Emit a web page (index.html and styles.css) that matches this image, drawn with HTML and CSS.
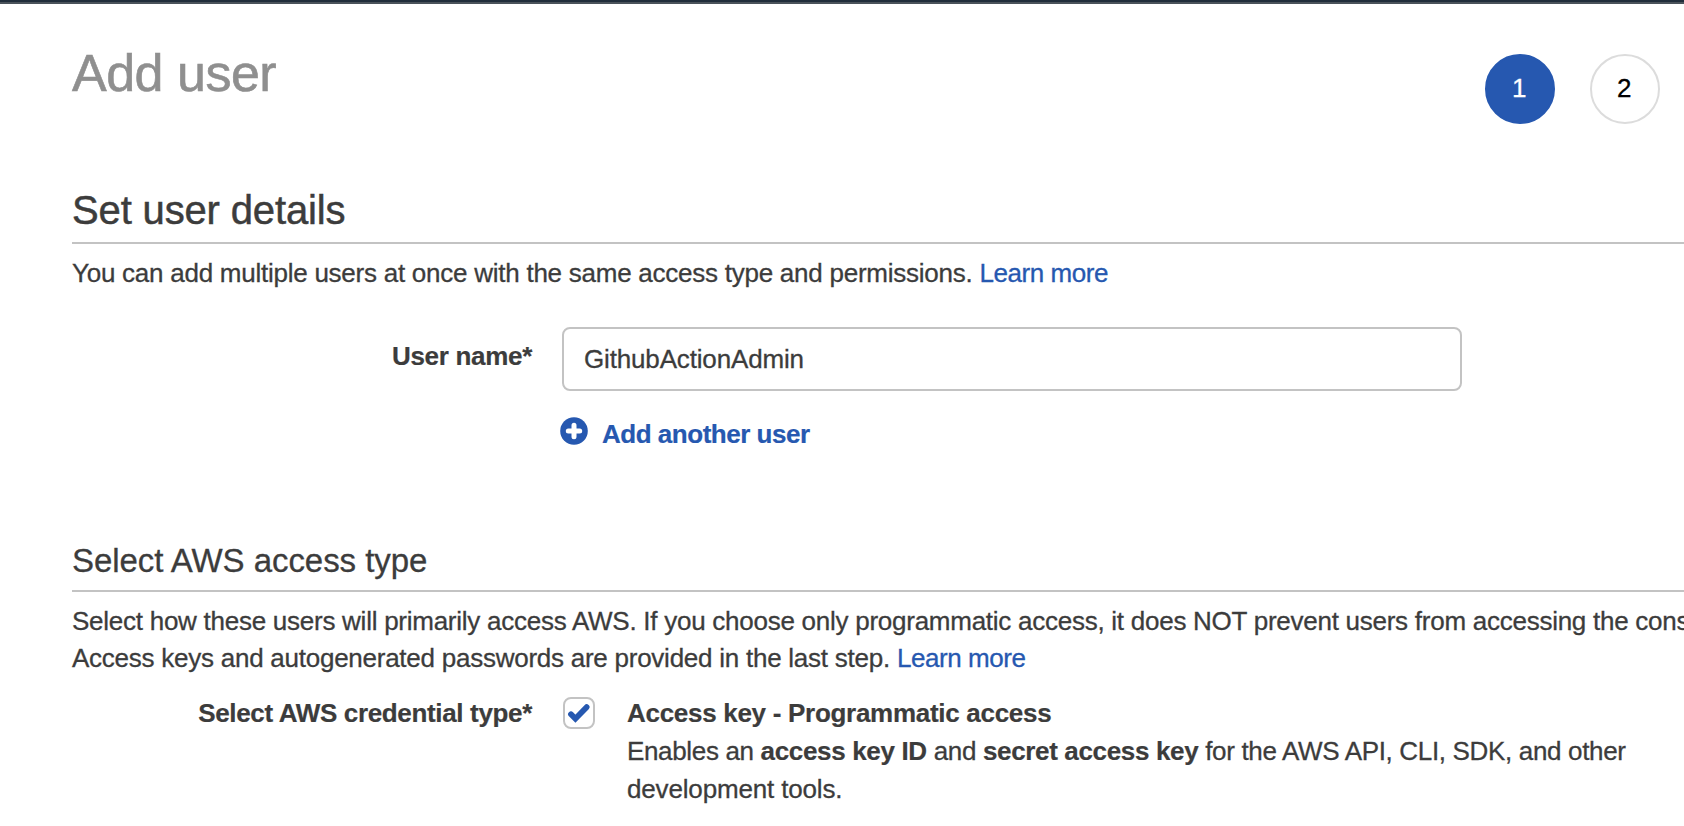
FILE: index.html
```html
<!DOCTYPE html>
<html lang="en">
<head>
<meta charset="utf-8">
<title>Add user</title>
<link rel="stylesheet" href="styles.css">
</head>
<body>
<div class="topbar"></div>
<main class="page">
  <header class="page-header">
    <h1 class="page-title">Add user</h1>
    <div class="steps">
      <span class="step step-active">1</span>
      <span class="step">2</span>
    </div>
  </header>

  <section class="details">
    <h2 class="section-title">Set user details</h2>
    <p class="intro"><span class="intro-text">You can add multiple users at once with the same access type and permissions.</span> <a class="link">Learn more</a></p>
    <div class="row">
      <label class="label label-input" for="username"><span>User name*</span></label>
      <div class="field">
        <input class="input" id="username" type="text" value="GithubActionAdmin">
        <a class="add-link">
          <svg class="plus" viewBox="0 0 28 28"><circle cx="14" cy="14" r="13.8" fill="#2658b0"/><path d="M14 8.3v11.4M8.3 14h11.4" stroke="#fff" stroke-width="5" stroke-linecap="round"/></svg>
          <span>Add another user</span>
        </a>
      </div>
    </div>
  </section>

  <section class="access">
    <h3 class="sub-title">Select AWS access type</h3>
    <p class="access-text"><span class="access-line">Select how these users will primarily access AWS. If you choose only programmatic access, it does NOT prevent users from accessing the cons</span><br><span>Access keys and autogenerated passwords are provided in the last step.</span> <a class="link">Learn more</a></p>
    <div class="row row-credential">
      <div class="label label-credential"><span>Select AWS credential type*</span></div>
      <span class="checkbox">
        <svg class="check" viewBox="0 0 32 32"><path d="M8 17.3l4.4 4.4L23.6 10.2" fill="none" stroke="#2658b0" stroke-width="5.8" stroke-linecap="round" stroke-linejoin="miter"/></svg>
      </span>
      <div class="option">
        <div class="option-title"><b>Access key - Programmatic access</b></div>
        <div class="option-text">Enables an <b>access key ID</b> and <b>secret access key</b> for the AWS API, CLI, SDK, and other</div>
        <div class="option-rest">development tools.</div>
      </div>
    </div>
  </section>
</main>
</body>
</html>
```
FILE: styles.css
```css
* { box-sizing: border-box; }

body {
  margin: 0;
  height: 826px;
  overflow: hidden;
  background: #fff;
  color: #3c3c3c;
  font: 26px/38px "Liberation Sans", Arial, sans-serif;
  letter-spacing: -0.25px;
  -webkit-text-stroke: 0.3px;
}

h1, h2, h3, p { margin: 0; font-weight: 400; }

b, .label, .add-link { -webkit-text-stroke: 0.2px; }

.topbar {
  height: 4px;
  background: #212d3b;
  border-bottom: 2px solid #4a525a;
}

.page { padding-left: 72px; }

.page-header {
  display: flex;
  justify-content: space-between;
  height: 182px;
  padding: 39px 24px 0 0;
}

.page-title {
  font-size: 52px;
  line-height: 60px;
  color: #8f8f8f;
  letter-spacing: -0.5px;
  -webkit-text-stroke: 0.6px;
}

.steps { display: flex; gap: 35px; padding-top: 11px; }

.step {
  width: 70px;
  height: 70px;
  padding-right: 2px;
  border: 2px solid #dcdcdc;
  border-radius: 50%;
  color: #000;
  text-align: center;
  line-height: 64px;
}

.step-active { background: #2658b0; border-color: #2658b0; color: #fff; }

.section-title {
  font-size: 40px;
  line-height: 48px;
  letter-spacing: -0.15px;
  padding-bottom: 8px;
  border-bottom: 2px solid #c3c3c3;
  -webkit-text-stroke: 0.5px;
}

.intro { margin-top: 10px; white-space: nowrap; }

.link { color: #2658b0; letter-spacing: -0.42px; }

.row { display: flex; }

.details .row { margin-top: 35px; }

.label {
  width: 460px;
  text-align: right;
  font-weight: 700;
  letter-spacing: -0.3px;
  white-space: nowrap;
}

.label-credential { letter-spacing: -0.34px; }

.label-input { padding-top: 10px; }

.field { width: 900px; margin-left: 30px; }

.input {
  display: block;
  width: 900px;
  height: 64px;
  padding: 0 20px;
  border: 2px solid #c3c3c3;
  border-radius: 8px;
  background: #fff;
  color: #3c3c3c;
  font: inherit;
  letter-spacing: -0.16px;
  outline: none;
}

.add-link {
  display: flex;
  margin: 24px 0 0 -2px;
  color: #2658b0;
  font-weight: 700;
  letter-spacing: -0.48px;
}

.plus { width: 28px; height: 28px; margin: 2px 14px 0 0; }

.access { margin-top: 88px; }

.sub-title {
  font-size: 33px;
  line-height: 40px;
  letter-spacing: -0.05px;
  padding-bottom: 9px;
  border-bottom: 2px solid #c3c3c3;
}

.access-text { margin-top: 11px; line-height: 37px; white-space: nowrap; }

.access-line { letter-spacing: -0.258px; }

.row-credential { margin-top: 17px; }

.checkbox {
  width: 32px;
  height: 32px;
  margin: 3px 32px 0 31px;
  border: 2px solid #c3c3c3;
  border-radius: 8px;
}

.check { display: block; width: 32px; height: 32px; margin: -2px; }

.option { white-space: nowrap; }

.option-title { letter-spacing: -0.29px; }

.option-text { letter-spacing: -0.34px; }

.option-rest { letter-spacing: -0.16px; }
```
